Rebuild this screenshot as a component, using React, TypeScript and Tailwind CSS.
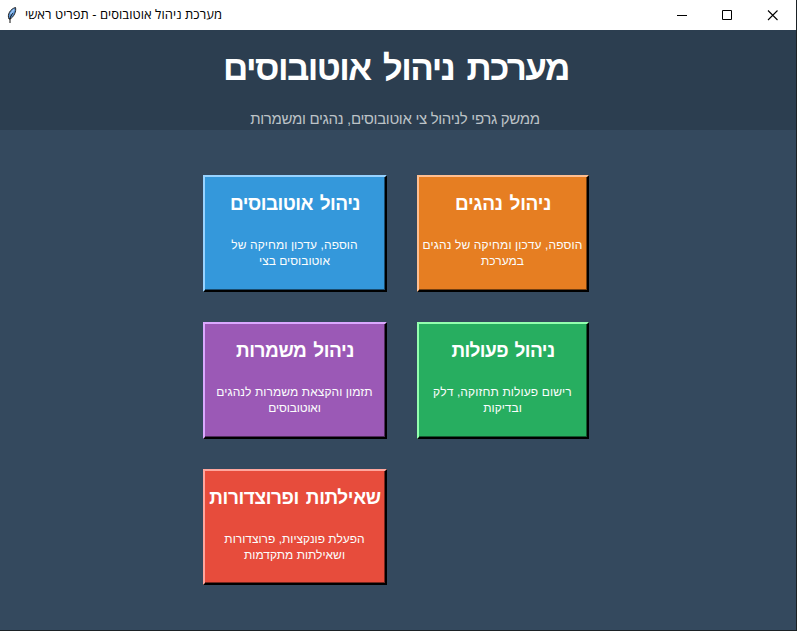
import React from "react";

type CardProps = {
  title: string;
  lines: [string, string];
  titleClass: string;
  lineClasses: [string, string];
  className: string;
  shade: string;
};

function Card({ title, lines, titleClass, lineClasses, className, shade }: CardProps) {
  return (
    <button dir="rtl" className={`flex border-2 border-r-black border-b-black ${className}`}>
      <span className={`flex h-full w-full flex-col items-center border-r border-b pt-[13px] text-white ${shade}`}>
        <span className={`ml-px h-[27px] font-bold whitespace-nowrap text-[19px] leading-[27px] [word-spacing:2px] ${titleClass}`}>{title}</span>
        <span className={`mt-[20px] h-4 whitespace-nowrap text-[12px] leading-4 text-[#fbfdfd] ${lineClasses[0]}`}>{lines[0]}</span>
        <span className={`h-4 whitespace-nowrap text-[12px] leading-4 text-[#fbfdfd] ${lineClasses[1]}`}>{lines[1]}</span>
      </span>
    </button>
  );
}

export default function App() {
  return (
    <div className="flex h-[631px] w-[797px] flex-col overflow-hidden border-r border-b border-[#1b2226] bg-[#34495e] font-['Liberation_Sans',sans-serif]">
      <header className="flex h-[30px] shrink-0 items-center bg-white">
        <svg className="ml-[6px] h-[18px] w-3" viewBox="0 0 12 18">
          <path d="M3 13 C1 9 4 3 9.500 1.500 C10.500 5 8 11 4 13Z" fill="#5b95d6" stroke="#222" strokeWidth="1" />
          <path d="M4 17V12L6.500 7" fill="none" stroke="#111" strokeWidth="1" />
          <path d="M4.500 8L8 3.500" fill="none" stroke="#9cc6f5" strokeWidth="1.500" />
        </svg>
        <span dir="rtl" className="ml-[7px] whitespace-nowrap font-['Open_Sans',sans-serif] text-[13px] tracking-[0.03px] text-black">מערכת ניהול אוטובוסים - תפריט ראשי</span>
        <svg className="ml-auto mr-[18px] h-[11px] w-[101px]" viewBox="0 0 101 11" fill="none" stroke="#000">
          <path d="M0 5.500H10" />
          <path d="M45.500 .5h9v9h-9z" />
          <path d="M91 .5l9.500 9.500M100.500 .5l-9.500 9.500" strokeWidth="1.100" />
        </svg>
      </header>
      <section dir="rtl" className="flex h-[100px] shrink-0 flex-col items-center bg-[#2c3e50]">
        <h1 className="mt-[13px] mr-[4px] h-[50px] whitespace-nowrap text-[35px] leading-[50px] font-bold tracking-[-1.550px] text-white [word-spacing:4px]">מערכת ניהול אוטובוסים</h1>
        <p className="mt-[16px] mr-[6px] h-[20px] whitespace-nowrap text-[15px] leading-[20px] tracking-[-0.320px] text-[#bdc3c7]">ממשק גרפי לניהול צי אוטובוסים, נהגים ומשמרות</p>
      </section>
      <main className="ml-[203px] mt-[45px] grid grid-cols-[184px_172px] grid-rows-[117px_117px_116px] gap-[30px]">
        <Card title="ניהול אוטובוסים" lines={["הוספה, עדכון ומחיקה של", "אוטובוסים בצי"]} titleClass="tracking-[-0.530px]" lineClasses={["tracking-[0.080px]", ""]} className="border-t-[#98d3ff] border-l-[#98d3ff] bg-[#3498db]" shade="border-[#1a4c6e]" />
        <Card title="ניהול נהגים" lines={["הוספה, עדכון ומחיקה של נהגים", "במערכת"]} titleClass="tracking-[-0.300px]" lineClasses={["tracking-[0.130px]", ""]} className="border-t-[#ffbf91] border-l-[#ffbf91] bg-[#e67e22]" shade="border-[#733f11]" />
        <Card title="ניהול משמרות" lines={["תזמון והקצאת משמרות לנהגים", "ואוטובוסים"]} titleClass="tracking-[-0.450px]" lineClasses={["tracking-[0.080px]", "tracking-[-0.150px]"]} className="border-t-[#dba8ff] border-l-[#dba8ff] bg-[#9b59b6]" shade="border-[#4e2d5b]" />
        <Card title="ניהול פעולות" lines={["רישום פעולות תחזוקה, דלק", "ובדיקות"]} titleClass="tracking-[-0.600px]" lineClasses={["tracking-[0.120px]", ""]} className="border-t-[#93ffaf] border-l-[#93ffaf] bg-[#27ae60]" shade="border-[#145730]" />
        <Card title="שאילתות ופרוצדורות" lines={["הפעלת פונקציות, פרוצדורות", "ושאילתות מתקדמות"]} titleClass="tracking-[-0.380px]" lineClasses={["", ""]} className="border-t-[#ffa69d] border-l-[#ffa69d] bg-[#e74c3c]" shade="border-[#74261e]" />
      </main>
    </div>
  );
}
